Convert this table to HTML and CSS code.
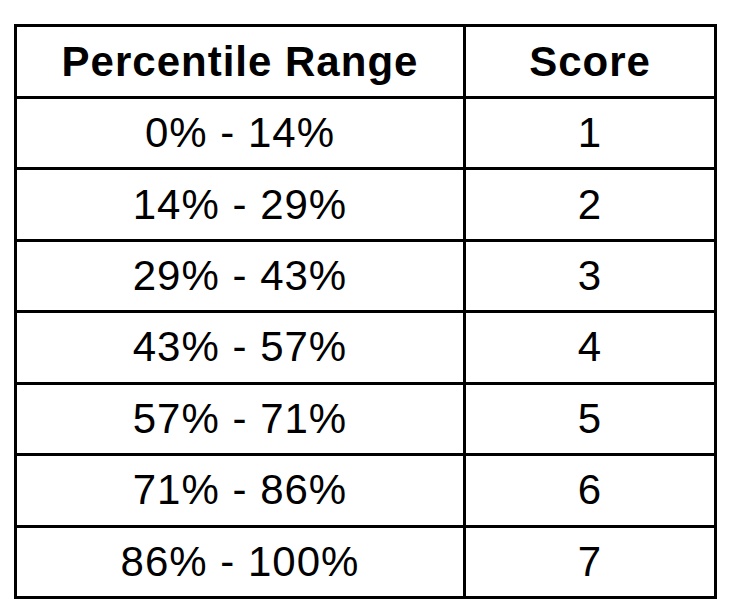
FILE: index.html
```html
<!DOCTYPE html>
<html>
<head>
<meta charset="utf-8">
<link rel="stylesheet" href="styles.css">
</head>
<body>
<table class="score-table">
  <colgroup>
    <col class="col-range">
    <col class="col-score">
  </colgroup>
  <thead>
    <tr class="head-row"><th>Percentile Range</th><th>Score</th></tr>
  </thead>
  <tbody>
    <tr><td>0% - 14%</td><td>1</td></tr>
    <tr><td>14% - 29%</td><td>2</td></tr>
    <tr><td>29% - 43%</td><td>3</td></tr>
    <tr><td>43% - 57%</td><td>4</td></tr>
    <tr><td>57% - 71%</td><td>5</td></tr>
    <tr><td>71% - 86%</td><td>6</td></tr>
    <tr><td>86% - 100%</td><td>7</td></tr>
  </tbody>
</table>
</body>
</html>
```
FILE: styles.css
```css
html, body {
  margin: 0;
  padding: 0;
  background: #ffffff;
}
body {
  padding: 24px 0 0 14px;
  font-family: "Liberation Sans", Arial, sans-serif;
  color: #000;
}
.score-table {
  border-collapse: separate;
  border-spacing: 0;
  table-layout: fixed;
  width: 703px;
  border-left: 3px solid #000;
  border-top: 3px solid #000;
}
.col-range { width: 449px; }
.col-score { width: 251px; }
.score-table th,
.score-table td {
  border-right: 3px solid #000;
  border-bottom: 3px solid #000;
  padding: 0;
  text-align: center;
  vertical-align: middle;
  font-size: 42px;
  line-height: 1;
  letter-spacing: 1px;
  box-sizing: border-box;
  height: 71.43px;
}
.score-table th {
  font-weight: bold;
  height: 72px;
}
.score-table td {
  font-weight: normal;
}
```
